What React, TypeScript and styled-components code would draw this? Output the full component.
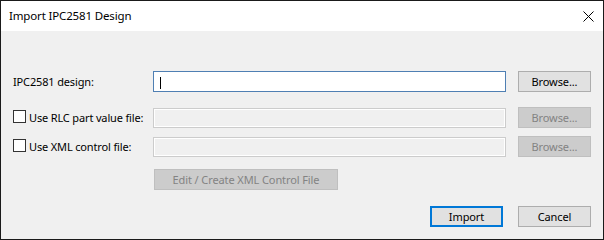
import React from "react";
import styled, { createGlobalStyle, css } from "styled-components";

const Global = createGlobalStyle`
  html, body { margin: 0; padding: 0; background: #ffffff; }
  body { font-family: "Noto Sans", "Open Sans", "Liberation Sans", sans-serif; font-size: 11px; color: #000; }
  * { box-sizing: border-box; }
`;

const Window = styled.div`
  width: 604px;
  height: 240px;
  border: 1px solid #1a1a1a;
  display: flex;
  flex-direction: column;
  background: #f0f0f0;
`;

const TitleBar = styled.div`
  height: 30px;
  background: #ffffff;
  display: flex;
  align-items: center;
  justify-content: space-between;
  padding-left: 8px;
  padding-right: 9px;
  flex-shrink: 0;
`;

const Title = styled.span`
  font-size: 11.5px;
  letter-spacing: -0.15px;
  margin-top: -1px;
`;

const CloseBtn = styled.div`
  width: 12px;
  height: 12px;
  display: flex;
  align-items: center;
  justify-content: center;
`;

const Body = styled.div`
  flex: 1;
  padding: 40px 12px 11px 11px;
  display: flex;
  flex-direction: column;
`;

const Row = styled.div<{ $mt?: number }>`
  display: grid;
  grid-template-columns: 141px 353px 85px;
  height: 21px;
  align-items: center;
  margin-top: ${(p) => p.$mt ?? 0}px;
  & > button {
    justify-self: end;
  }
`;

const Label = styled.label`
  display: flex;
  align-items: center;
  gap: 3px;
  white-space: nowrap;
  padding-left: 1px;
  letter-spacing: -0.15px;
  margin-top: -1px;
`;

const Check = styled.span`
  width: 13px;
  height: 13px;
  border: 1px solid #333333;
  background: #ffffff;
  margin-top: -1px;
  flex-shrink: 0;
`;

const TextBox = styled.div<{ $enabled?: boolean }>`
  height: 21px;
  position: relative;
  ${(p) =>
    p.$enabled
      ? css`
          border: 1px solid #4f7fb3;
          background: #ffffff;
        `
      : css`
          height: 20px;
          border: 1px solid #cccccc;
          box-shadow: inset 0 0 0 1px #ffffff;
          background: #f0f0f0;
        `}
`;

const Caret = styled.span`
  position: absolute;
  left: 6px;
  top: 5px;
  width: 1px;
  height: 12px;
  background: #000000;
`;

const Button = styled.button<{ $disabled?: boolean; $default?: boolean; $w?: number }>`
  height: 21px;
  width: ${(p) => p.$w ?? 73}px;
  padding: 0 0 1px;
  margin: 0;
  font-family: inherit;
  font-size: 11px;
  letter-spacing: -0.1px;
  display: flex;
  align-items: center;
  justify-content: center;
  ${(p) =>
    p.$disabled
      ? css`
          background: #cccccc;
          border: 1px solid #bfbfbf;
          color: #838383;
        `
      : css`
          background: #e1e1e1;
          border: 1px solid #adadad;
          color: #000000;
        `}
  ${(p) =>
    p.$default &&
    css`
      border: 2px solid #0078d7;
    `}
`;

const EditRow = styled.div`
  margin-top: 12px;
  padding-left: 142px;
  display: flex;
`;

const Footer = styled.div`
  margin-top: 16px;
  display: flex;
  justify-content: flex-end;
  gap: 15px;
`;

export default function App() {
  return (
    <>
      <Global />
      <Window>
        <TitleBar>
          <Title>Import IPC2581 Design</Title>
          <CloseBtn>
            <svg width="11" height="11" viewBox="0 0 11 11">
              <path d="M0.5 0.5 L10.5 10.5 M10.5 0.5 L0.5 10.5" stroke="#000" strokeWidth="1" fill="none" />
            </svg>
          </CloseBtn>
        </TitleBar>
        <Body>
          <Row>
            <Label>IPC2581 design:</Label>
            <TextBox $enabled>
              <Caret />
            </TextBox>
            <Button>Browse...</Button>
          </Row>
          <Row $mt={15}>
            <Label>
              <Check />
              Use RLC part value file:
            </Label>
            <TextBox />
            <Button $disabled>Browse...</Button>
          </Row>
          <Row $mt={8}>
            <Label>
              <Check />
              Use XML control file:
            </Label>
            <TextBox />
            <Button $disabled>Browse...</Button>
          </Row>
          <EditRow>
            <Button $disabled $w={184}>Edit / Create XML Control File</Button>
          </EditRow>
          <Footer>
            <Button $default>Import</Button>
            <Button>Cancel</Button>
          </Footer>
        </Body>
      </Window>
    </>
  );
}
